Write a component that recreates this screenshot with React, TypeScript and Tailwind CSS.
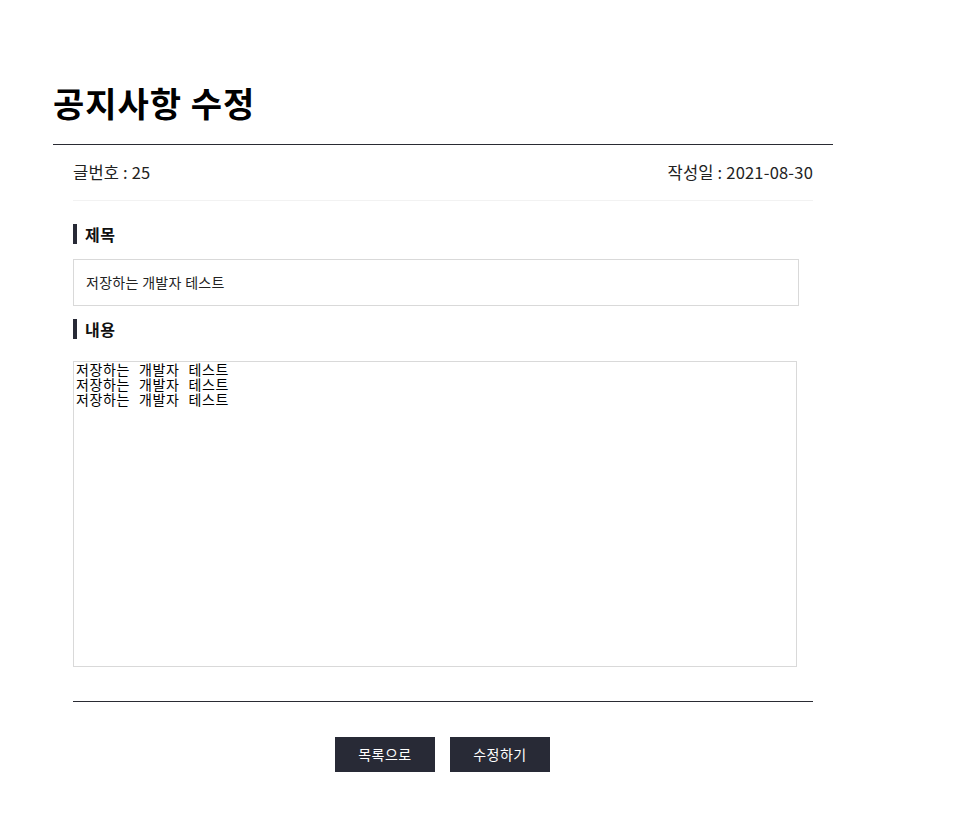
import React from "react";

const font = { fontFamily: '"Noto Sans CJK KR", "Noto Sans", sans-serif' };

const Label = ({ text }: { text: string }) => (
  <div className="flex items-center h-[20px]">
    <span className="w-[4px] h-[20px] bg-[#282a36]" />
    <span className="ml-[8px] text-[16px] font-bold text-[#111] leading-[20px] tracking-[0.5px]">{text}</span>
  </div>
);

export default function App() {
  const body = "저장하는 개발자 테스트\n저장하는 개발자 테스트\n저장하는 개발자 테스트";
  return (
    <div className="min-h-screen bg-white" style={font}>
      <div className="w-[780px] ml-[53px] pt-[83px]">
        {/* Title */}
        <div className="pb-[21px] border-b border-[#2a2b33]">
          <h1 className="text-[34px] font-bold leading-[40px] tracking-[1px] text-black">공지사항 수정</h1>
        </div>

        <div className="px-[20px]">
          {/* Meta */}
          <div className="h-[56px] flex items-center justify-between border-b border-[#f2f2f2] text-[16.5px] tracking-[0.2px] text-[#222]">
            <span>글번호 : 25</span>
            <span>작성일 : 2021-08-30</span>
          </div>

          <div className="mt-[23px]">
            <Label text="제목" />
          </div>
          <div className="mt-[15px] w-[726px] h-[47px] border border-[#d9d9d9] flex items-center px-[12px] text-[14px] tracking-[0.3px] text-[#222]">
            저장하는 개발자 테스트
          </div>

          <div className="mt-[13px]">
            <Label text="내용" />
          </div>
          <textarea
            className="mt-[22px] block w-[724px] h-[306px] border border-[#d9d9d9] px-[2px] py-[1px] text-[14px] leading-[15px] tracking-[0.6px] text-black resize-none outline-none"
            style={{ fontFamily: '"DejaVu Sans Mono", "Noto Sans CJK KR", monospace' }}
            defaultValue={body}
          />

          <div className="mt-[34px] border-t border-[#2a2b33]" />

          <div className="mt-[35px] flex justify-center gap-[15px] pr-[1px]">
            <button className="w-[100px] h-[35px] bg-[#282a36] text-white text-[14px] tracking-[0.5px]">목록으로</button>
            <button className="w-[100px] h-[35px] bg-[#282a36] text-white text-[14px] tracking-[0.5px]">수정하기</button>
          </div>
        </div>
      </div>
    </div>
  );
}
